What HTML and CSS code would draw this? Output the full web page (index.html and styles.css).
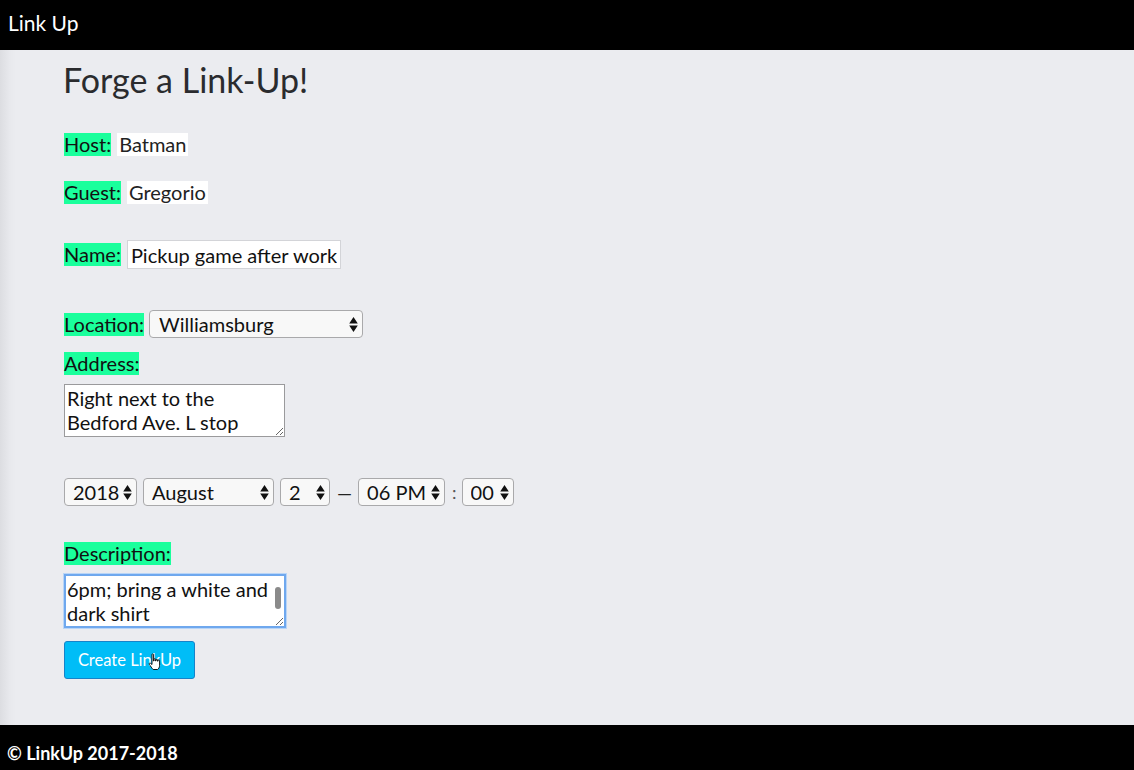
FILE: index.html
```html
<!DOCTYPE html>
<html>
<head>
<meta charset="utf-8">
<title>Link Up</title>
<link rel="stylesheet" href="styles.css">
</head>
<body>
<header class="topbar">Link Up</header>
<main class="main">
  <h1 class="title">Forge a Link-Up!</h1>
  <div class="row row-host"><span class="lbl">Host:</span><span class="val">Batman</span></div>
  <div class="row row-guest"><span class="lbl">Guest:</span><span class="val">Gregorio</span></div>
  <div class="row row-name"><span class="lbl">Name:</span><input class="text-in" type="text" value="Pickup game after work"></div>
  <div class="row row-loc"><span class="lbl">Location:</span>
    <span class="sel sel-loc"><select><option>Williamsburg</option></select><svg class="arr" viewBox="0 0 8 14"><path d="M4 0L8 6H0Z M4 14L0 8H8Z"/></svg></span>
  </div>
  <div class="row row-addr"><span class="lbl">Address:</span></div>
  <textarea class="area area-addr">Right next to the Bedford Ave. L stop</textarea>
  <div class="row row-date">
    <span class="sel sel-year"><select><option>2018</option></select><svg class="arr" viewBox="0 0 8 14"><path d="M4 0L8 6H0Z M4 14L0 8H8Z"/></svg></span>
    <span class="sel sel-month"><select><option>August</option></select><svg class="arr" viewBox="0 0 8 14"><path d="M4 0L8 6H0Z M4 14L0 8H8Z"/></svg></span>
    <span class="sel sel-day"><select><option>2</option></select><svg class="arr" viewBox="0 0 8 14"><path d="M4 0L8 6H0Z M4 14L0 8H8Z"/></svg></span>
    <span class="dash">—</span>
    <span class="sel sel-hour"><select><option>06 PM</option></select><svg class="arr" viewBox="0 0 8 14"><path d="M4 0L8 6H0Z M4 14L0 8H8Z"/></svg></span>
    <span class="colon">:</span>
    <span class="sel sel-min"><select><option>00</option></select><svg class="arr" viewBox="0 0 8 14"><path d="M4 0L8 6H0Z M4 14L0 8H8Z"/></svg></span>
  </div>
  <div class="row row-desc"><span class="lbl">Description:</span></div>
  <div class="area-wrap">
    <textarea class="area area-desc">6pm; bring a white and dark shirt</textarea>
    <span class="thumb"></span>
  </div>
  <div class="btn-wrap">
    <button class="btn" type="button">Create LinkUp</button>
    <svg class="hand" viewBox="0 0 14 18"><path d="M4 1.5c0-.8 1.600-.8 1.6 0V8h.4V6.3c0-.8 1.6-.8 1.6 0V8h.4V7c0-.8 1.6-.8 1.6 0v1.2h.4v-.6c0-.8 1.6-.8 1.6 0v4.6c0 2-1 3.8-2 4.3H5.2C4 15.5 2.5 13 1.3 11.3c-.5-.8.4-1.6 1.2-1L4 11.5Z" fill="#fff" stroke="#000" stroke-width="0.9" stroke-linejoin="round"/></svg>
  </div>
</main>
<footer class="foot">© LinkUp 2017-2018</footer>
</body>
</html>
```

FILE: styles.css
```css
* { box-sizing: border-box; }
html, body { margin: 0; padding: 0; }
body {
  height: 770px;
  display: flex;
  flex-direction: column;
  font-family: "Lato", "Noto Sans", sans-serif;
  color: #222;
  background: #ebecf0;
}
.topbar {
  height: 50px;
  flex: none;
  background: #000;
  color: #fff;
  font-size: 21px;
  line-height: 45px;
  padding-left: 8px;
}
.main {
  flex: 1;
  display: flex;
  flex-direction: column;
  align-items: flex-start;
  padding-left: 64px;
  background: linear-gradient(to right, #dcdde1 0px, #e8e9ed 10px, #ebecf0 16px);
}
.title {
  margin: 9px 0 0 -1px;
  font-size: 34px;
  line-height: 42px;
  font-weight: 400;
  color: #2a2b2e;
}
.row {
  display: flex;
  align-items: center;
  font-size: 20px;
}
.lbl {
  background: #1aff9c;
  color: #111;
  line-height: 23px;
  height: 23px;
}
.val {
  background: #fff;
  color: #222;
  line-height: 23px;
  height: 23px;
  margin-left: 6px;
  padding: 0 2px;
}
.row-host { margin-top: 32px; }
.row-guest { margin-top: 25px; }
.row-name { margin-top: 36px; }
.text-in {
  margin-left: 6px;
  width: 214px;
  height: 29px;
  border: 1px solid #d3d4d8;
  background: #fff;
  font: inherit;
  font-size: 20px;
  color: #111;
  padding: 0 3px;
  outline: none;
}
.row-loc { margin-top: 41px; }
.row-addr { margin-top: 14px; }
.sel {
  position: relative;
  display: inline-block;
  height: 28px;
}
.sel select {
  -webkit-appearance: none;
  appearance: none;
  width: 100%;
  height: 28px;
  border: 1px solid #a9a9ab;
  border-radius: 4px;
  background: #f8f8f8;
  font-family: inherit;
  font-size: 20px;
  color: #111;
  padding: 0 0 0 8px;
  outline: none;
}
.sel .arr {
  position: absolute;
  right: 5px;
  top: 7px;
  width: 9px;
  height: 15px;
  fill: #111;
  pointer-events: none;
}
.sel-loc { margin-left: 5px; width: 214px; }
.sel-loc select { padding-left: 9px; }
.area {
  display: block;
  width: 221px;
  height: 53px;
  font-family: inherit;
  font-size: 20px;
  line-height: 24px;
  color: #111;
  padding: 1px 2px;
  resize: both;
  outline: none;
}
.area-addr {
  margin-top: 9px;
  border: 1px solid #9a9a9c;
  background: #fff;
}
.row-date { margin-top: 41px; }
.sel-year { width: 73px; }
.sel-month { width: 131px; margin-left: 6px; }
.sel-day { width: 50px; margin-left: 6px; }
.sel-hour { width: 87px; }
.sel-min { width: 52px; }
.dash { margin: 0 6px 0 7px; color: #222; font-size: 19px; }
.colon { margin: 0 5px 0 7px; color: #555; font-size: 18px; }
.row-desc { margin-top: 36px; }
.area-wrap {
  position: relative;
  margin-top: 9px;
}
.area-desc {
  width: 222px;
  height: 54px;
  border: 2px solid #6fa8ee;
  background: #fff;
  overflow: hidden;
  padding: 1px 10px 1px 1px;
  box-shadow: 0 0 0 1px #b9d5f7;
}
.thumb {
  position: absolute;
  right: 5px;
  top: 13px;
  width: 6px;
  height: 22px;
  border-radius: 3px;
  background: #8a8a8a;
}
.btn-wrap {
  position: relative;
  margin-top: 13px;
}
.btn {
  width: 131px;
  height: 38px;
  background: #00bdf7;
  border: 1px solid #1683c9;
  border-radius: 3px;
  color: #fff;
  font-family: inherit;
  font-size: 16.5px;
  padding: 0;
}
.hand {
  position: absolute;
  left: 84px;
  top: 12px;
  width: 14px;
  height: 18px;
}
.foot {
  height: 45px;
  flex: none;
  background: #000;
  color: #fff;
  font-size: 18px;
  font-weight: 700;
  line-height: 56px;
  padding-left: 7px;
  overflow: hidden;
}
```
